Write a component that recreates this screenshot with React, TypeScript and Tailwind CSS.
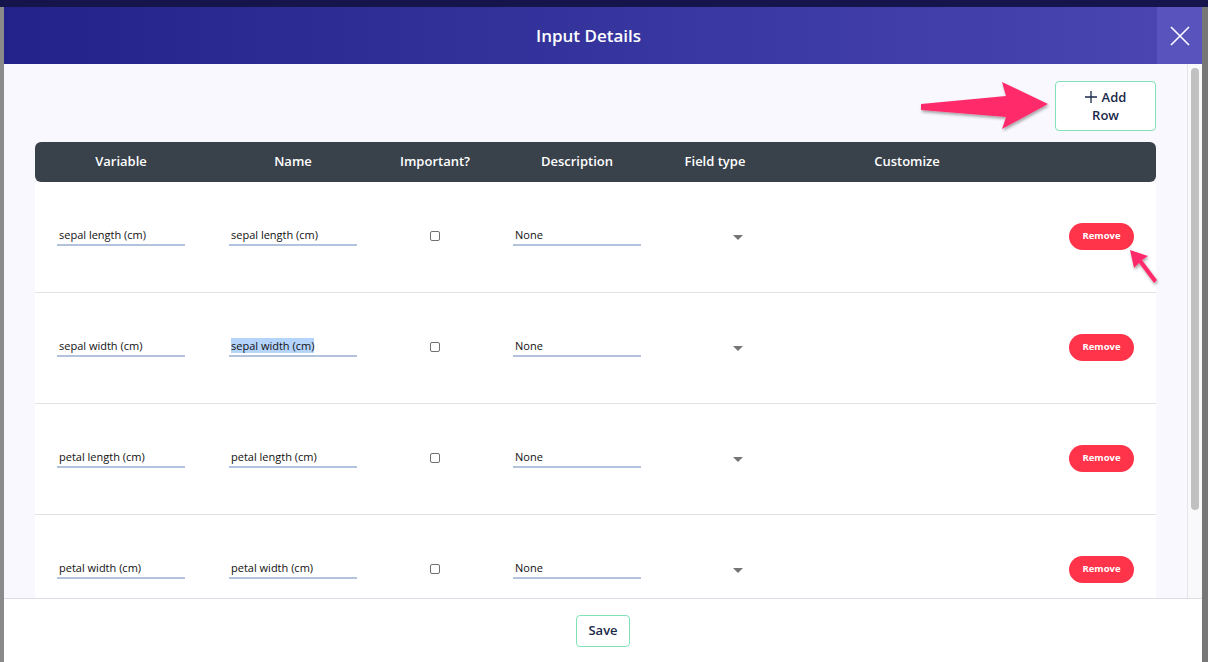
import React from "react";

const cols = [172, 172, 112, 172, 104, 280, 109];
const heads = ["Variable", "Name", "Important?", "Description", "Field type", "Customize", ""];
const rows = [
  "sepal length (cm)",
  "sepal width (cm)",
  "petal length (cm)",
  "petal width (cm)",
];

function Field({ text, selected }: { text: string; selected?: boolean }) {
  return (
    <div className="w-[128px] border-b-2 border-[#b3c3de] pl-[2px] pb-[2px] text-[11px] leading-[14px] text-[#111]">
      {selected ? <span className="bg-[#b4d4fc]">{text}</span> : text}
    </div>
  );
}

export default function App() {
  const font = { fontFamily: '"Open Sans", "Noto Sans", sans-serif' };
  return (
    <div className="relative flex h-[662px] w-[1208px] flex-col overflow-hidden bg-[#7a7a7a]" style={font}>
      <div className="h-[7px] shrink-0 bg-[#15154c]" />
      <div className="flex min-h-0 flex-1">
        <div className="w-[4px] shrink-0 bg-[#8a8a8a]" />
        <div className="flex w-[1198px] shrink-0 flex-col bg-white">
          {/* header */}
          <div className="flex h-[57px] shrink-0 bg-gradient-to-r from-[#22228a] to-[#4b46b2]">
            <div className="flex flex-1 items-center justify-center pl-[16px] text-[17px] font-semibold text-white">
              Input Details
            </div>
            <div className="flex w-[45px] items-center justify-center bg-[#5953bd]">
              <svg width="20" height="20" viewBox="0 0 20 20">
                <path d="M1 1 L19 19 M19 1 L1 19" stroke="white" strokeWidth="1.6" />
              </svg>
            </div>
          </div>
          {/* body */}
          <div className="flex h-[534px] shrink-0 bg-[#f8f8fe]">
            <div className="min-w-0 flex-1 overflow-hidden px-[31px] pt-[17px]">
              <div className="flex justify-end">
                <button className="flex h-[50px] w-[101px] flex-col items-center justify-center rounded-[4px] border border-[#80e2b6] bg-white text-[13px] font-semibold leading-[18px] text-[#1b2a4a]">
                  <span className="flex items-center gap-[5px]">
                    <svg width="12" height="12" viewBox="0 0 12 12">
                      <path d="M6 0 V12 M0 6 H12" stroke="#1b2a4a" strokeWidth="1.3" />
                    </svg>
                    Add
                  </span>
                  <span>Row</span>
                </button>
              </div>
              <div className="mt-[11px]">
                <div className="flex h-[40px] items-center rounded-[6px] bg-[#39414b] text-[13px] font-semibold text-white">
                  {heads.map((h, i) => (
                    <div key={i} style={{ width: cols[i] }} className="shrink-0 text-center">
                      {h}
                    </div>
                  ))}
                </div>
                {rows.map((r, ri) => (
                  <div key={ri} className="flex h-[111px] items-center border-b border-[#e2e2e6] bg-white">
                    <div className="flex w-[172px] shrink-0 justify-center">
                      <Field text={r} />
                    </div>
                    <div className="flex w-[172px] shrink-0 justify-center">
                      <Field text={r} selected={ri === 1} />
                    </div>
                    <div className="flex w-[112px] shrink-0 justify-center pb-[3px]">
                      <div className="h-[10px] w-[10px] rounded-[2px] border border-[#707070] bg-white" />
                    </div>
                    <div className="flex w-[172px] shrink-0 justify-center">
                      <Field text="None" />
                    </div>
                    <div className="flex w-[104px] shrink-0 justify-end pr-[24px]">
                      <svg width="10" height="5" viewBox="0 0 10 5">
                        <path d="M0 0 H10 L5 5 Z" fill="#757575" />
                      </svg>
                    </div>
                    <div className="w-[280px] shrink-0" />
                    <div className="flex w-[109px] shrink-0 justify-center pb-[2px]">
                      <button className="h-[27px] w-[65px] rounded-full bg-[#ff3349] text-[9.5px] font-bold text-white">
                        Remove
                      </button>
                    </div>
                  </div>
                ))}
              </div>
            </div>
            <div className="relative w-[15px] shrink-0 border-l border-[#e6e6ea] bg-[#f9f9fb]">
              <div className="absolute left-[3px] top-[4px] h-[442px] w-[8px] rounded-full bg-[#c1c1c1]" />
            </div>
          </div>
          {/* footer */}
          <div className="flex flex-1 justify-center border-t border-[#dcdce4] bg-white pt-[16px]">
            <button className="h-[32px] w-[54px] rounded-[4px] border border-[#80e2b6] bg-white text-[13px] font-semibold text-[#1b2a4a]">
              Save
            </button>
          </div>
        </div>
        <div className="w-[6px] shrink-0 bg-[#777]" />
      </div>

      {/* annotation arrows */}
      <svg className="pointer-events-none absolute left-0 top-0" width="1208" height="662">
        <defs>
          <filter id="sh" x="-20%" y="-20%" width="140%" height="160%">
            <feDropShadow dx="1" dy="2" stdDeviation="1.5" floodColor="#000" floodOpacity="0.35" />
          </filter>
        </defs>
        <polygon
          points="921,104 1006,96 1002,82 1048,104 1002,129 1006,117 921,110"
          fill="#ff2c6b"
          filter="url(#sh)"
        />
        <polygon
          points="1130,250 1148,256 1142,260 1157,280 1154,283 1139,263 1134,268"
          fill="#ff2c6b"
          filter="url(#sh)"
        />
      </svg>
    </div>
  );
}
